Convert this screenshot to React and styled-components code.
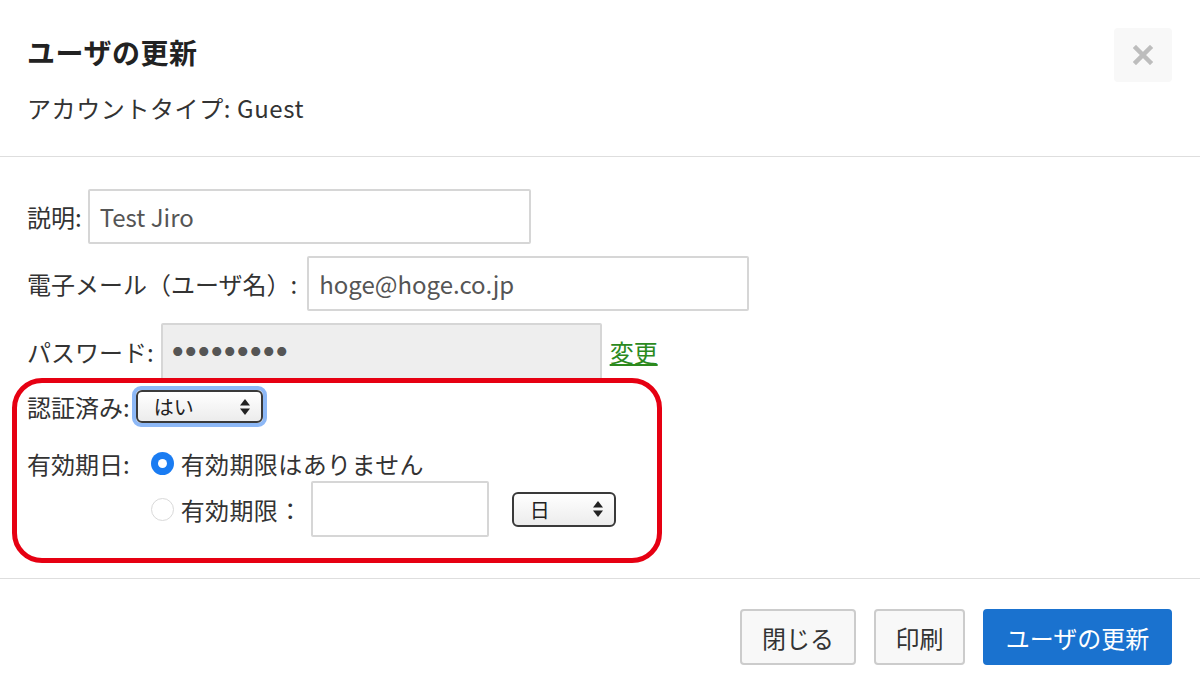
import React from "react";
import styled, { createGlobalStyle } from "styled-components";

const GlobalStyle = createGlobalStyle`
  html, body {
    margin: 0;
    padding: 0;
    background: #fff;
  }
  body {
    font-family: "Noto Sans CJK JP", "Noto Sans", sans-serif;
    color: #333;
  }
`;

const Modal = styled.div`
  width: 1200px;
  height: 689px;
  background: #fff;
  overflow: hidden;
`;

const Header = styled.div`
  display: flex;
  justify-content: space-between;
  align-items: flex-start;
  padding: 28px 28px 32px 27px;
  border-bottom: 1px solid #dedede;
`;

const Titles = styled.div`
  padding-top: 6px;
`;

const Title = styled.h2`
  margin: 0;
  font-size: 28px;
  line-height: 36px;
  font-weight: 700;
  color: #222;
  letter-spacing: 0.5px;
`;

const Subtitle = styled.div`
  margin-top: 22px;
  font-size: 24px;
  line-height: 32px;
  color: #333;
  letter-spacing: 0.6px;
`;

const CloseButton = styled.button`
  width: 58px;
  height: 54px;
  border: none;
  border-radius: 4px;
  background: #f8f8f8;
  display: flex;
  align-items: center;
  justify-content: center;
  padding: 0;
`;

const Body = styled.div`
  padding: 32px 0 15px 0;
  display: flex;
  flex-direction: column;
  gap: 12px;
`;

const Row = styled.div`
  display: flex;
  align-items: center;
  padding-left: 27px;
  font-size: 24px;
  color: #333;
`;

const Label = styled.span`
  white-space: nowrap;
  margin-right: ${(p) => (p.gap === undefined ? 4 : p.gap)}px;
`;

const TextInput = styled.div`
  box-sizing: border-box;
  width: ${(p) => p.width}px;
  height: ${(p) => p.height || 55}px;
  margin-left: ${(p) => p.offset || 0}px;
  border: 2px solid #d6d6d6;
  border-radius: 2px;
  background: ${(p) => (p.disabled ? "#eeeeee" : "#fff")};
  display: flex;
  align-items: center;
  padding: 0 10px;
  font-size: 24px;
  color: #555;
`;

const Dots = styled.span`
  letter-spacing: 3px;
  font-size: 10px;
  color: #555;
`;

const ChangeLink = styled.a`
  margin-left: 8px;
  color: #2c8a1e;
  text-decoration: underline;
  font-size: 24px;
`;

const Highlight = styled.div`
  margin: -14px 0 0 12px;
  width: 650px;
  box-sizing: border-box;
  border: 5px solid #e60012;
  border-radius: 30px;
  padding: 3px 0 21px 10px;
  display: flex;
  flex-direction: column;
  gap: 19px;
  position: relative;
`;

const InnerRow = styled.div`
  display: flex;
  align-items: ${(p) => p.align || "center"};
  font-size: 24px;
  color: #333;
`;

const FocusRing = styled.div`
  border: 4px solid #8db8f6;
  border-radius: 9px;
  display: inline-flex;
`;

const SelectBox = styled.div`
  box-sizing: border-box;
  width: ${(p) => p.width}px;
  height: ${(p) => p.height || 33}px;
  margin-left: ${(p) => p.offset || 0}px;
  border: 2px solid #3a3a3a;
  border-radius: 6px;
  background: linear-gradient(#ffffff, #ececec);
  display: flex;
  align-items: center;
  justify-content: space-between;
  padding: 0 10px 0 16px;
  font-size: 20px;
  color: #222;
`;

const RadioGroup = styled.div`
  display: flex;
  flex-direction: column;
  gap: 1px;
  margin-left: 21px;
`;

const RadioRow = styled.label`
  display: flex;
  align-items: center;
  height: ${(p) => p.height || 34}px;
  letter-spacing: 0.4px;
`;

const Radio = styled.span`
  box-sizing: border-box;
  flex: none;
  width: 23px;
  height: 23px;
  border-radius: 50%;
  margin-right: 7px;
  display: inline-flex;
  align-items: center;
  justify-content: center;
  background: ${(p) => (p.checked ? "#1a7cf2" : "#fff")};
  border: ${(p) => (p.checked ? "none" : "1.5px solid #d9d9d9")};
  &::after {
    content: "";
    display: ${(p) => (p.checked ? "block" : "none")};
    width: 9px;
    height: 9px;
    border-radius: 50%;
    background: #fff;
  }
`;

const Footer = styled.div`
  border-top: 1px solid #dedede;
  display: flex;
  justify-content: flex-end;
  gap: 18px;
  padding: 30px 28px 0 0;
`;

const Button = styled.button`
  box-sizing: border-box;
  height: 56px;
  padding: 0;
  width: ${(p) => p.width}px;
  border-radius: 4px;
  border: 2px solid ${(p) => (p.primary ? "#1a72cf" : "#cccccc")};
  background: ${(p) => (p.primary ? "#1a72cf" : "#f8f8f8")};
  color: ${(p) => (p.primary ? "#fff" : "#333")};
  font-family: "Noto Sans CJK JP", "Noto Sans", sans-serif;
  font-size: 24px;
`;

const Arrows = () => (
  <svg width="12" height="18" viewBox="0 0 12 18">
    <path d="M6 1 L11 7.5 H1 Z" fill="#222" />
    <path d="M6 17 L11 10.5 H1 Z" fill="#222" />
  </svg>
);

const CloseIcon = () => (
  <svg width="20" height="20" viewBox="0 0 20 20">
    <path d="M3 3 L17 17 M17 3 L3 17" stroke="#bdbdbd" strokeWidth="4.5" strokeLinecap="square" />
  </svg>
);

export default function App() {
  return (
    <>
      <GlobalStyle />
      <Modal>
        <Header>
          <Titles>
            <Title>ユーザの更新</Title>
            <Subtitle>アカウントタイプ: Guest</Subtitle>
          </Titles>
          <CloseButton aria-label="close">
            <CloseIcon />
          </CloseButton>
        </Header>
        <Body>
          <Row>
            <Label gap={6}>説明:</Label>
            <TextInput width={443}>Test Jiro</TextInput>
          </Row>
          <Row>
            <Label gap={10}>電子メール（ユーザ名）:</Label>
            <TextInput width={442}>hoge@hoge.co.jp</TextInput>
          </Row>
          <Row>
            <Label gap={7}>パスワード:</Label>
            <TextInput width={441} height={57} disabled>
              <Dots>●●●●●●●●●</Dots>
            </TextInput>
            <ChangeLink>変更</ChangeLink>
          </Row>
          <Highlight>
            <InnerRow>
              <Label gap={2}>認証済み:</Label>
              <FocusRing>
                <SelectBox width={127}>
                  はい
                  <Arrows />
                </SelectBox>
              </FocusRing>
            </InnerRow>
            <InnerRow align="flex-start">
              <Label gap={0}>有効期日:</Label>
              <RadioGroup>
                <RadioRow>
                  <Radio checked />
                  有効期限はありません
                </RadioRow>
                <RadioRow height={56}>
                  <Radio />
                  有効期限：
                  <TextInput width={178} height={56} offset={8} />
                  <SelectBox width={104} height={35} offset={23}>
                    日
                    <Arrows />
                  </SelectBox>
                </RadioRow>
              </RadioGroup>
            </InnerRow>
          </Highlight>
        </Body>
        <Footer>
          <Button width={116}>閉じる</Button>
          <Button width={91}>印刷</Button>
          <Button primary width={189}>ユーザの更新</Button>
        </Footer>
      </Modal>
    </>
  );
}
